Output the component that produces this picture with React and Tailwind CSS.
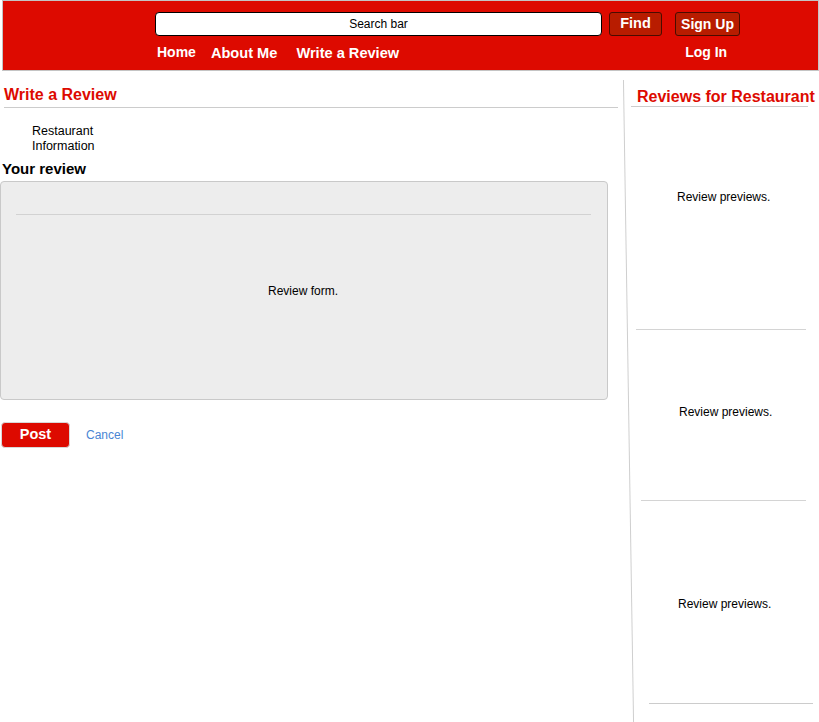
export default function App() {
  const font = { fontFamily: '"Liberation Sans", Arial, sans-serif' };
  return (
    <div className="w-[819px] h-[722px] bg-white overflow-hidden relative" style={font}>
      {/* Header */}
      <header className="ml-[2px] w-[817px] h-[71px] border border-[#c4c4c4] bg-[#dd0a00] pt-[11px] pl-[152px]">
        <div className="flex items-center h-[24px]">
          <div className="w-[447px] h-[24px] bg-white border border-black rounded-[4px] flex items-center justify-center text-[12px] text-black">
            Search bar
          </div>
          <button className="ml-[7px] w-[53px] h-[24px] bg-[#b81c00] border border-[#4a0c00] rounded-[3px] text-white font-bold text-[14.5px] flex items-center justify-center">
            Find
          </button>
          <button className="ml-[13px] w-[65px] h-[24px] bg-[#b81c00] border border-[#4a0c00] rounded-[3px] text-white font-bold text-[14px] flex items-center justify-center">
            Sign Up
          </button>
        </div>
        <div className="flex items-center mt-[9px] h-[17px] text-white font-bold leading-[17px]">
          <span className="ml-[2px] -mt-[2px] text-[14px]">Home</span>
          <span className="ml-[15px] text-[14.6px]">About Me</span>
          <span className="ml-[19px] text-[14.6px]">Write a Review</span>
          <span className="ml-[286px] -mt-[2px] text-[14px]">Log In</span>
        </div>
      </header>

      <main className="flex relative pt-[1px]">
        {/* Left column */}
        <section className="w-[625px] shrink-0">
          <div className="ml-[4px] w-[614px] border-b border-[#cccccc] pt-[14px] pb-[3px]">
            <h1 className="text-[#dd0a00] font-bold text-[16px] leading-[18px]">Write a Review</h1>
          </div>
          <div className="pl-[32px] mt-[16px] text-[12.5px] leading-[15px] text-black">
            <div>Restaurant</div>
            <div>Information</div>
          </div>
          <h2 className="ml-[2px] mt-[7px] font-bold text-[15px] leading-[16px] text-black">Your review</h2>
          <div className="mt-[4px] w-[608px] h-[219px] bg-[#ededed] border border-[#c9c9c9] rounded-[4px] flex flex-col">
            <div className="mt-[32px] ml-[15px] mr-[16px] h-px bg-[#d2d2d2]"></div>
            <div className="flex-1 flex items-center justify-center text-[12px] text-black pb-[33px] pr-[2px]">
              Review form.
            </div>
          </div>
          <div className="flex items-center mt-[22px]">
            <button className="ml-[1px] w-[69px] h-[26px] bg-[#dd0a00] border border-[#d8d8d8] rounded-[4px] text-white font-bold text-[14.5px] flex items-center justify-center">
              Post
            </button>
            <span className="ml-[16px] text-[12px] text-[#4a86d4]">Cancel</span>
          </div>
        </section>

        {/* Divider */}
        <div className="absolute left-[628px] top-[9px] w-px h-[642px] bg-[#cfcfcf] skew-x-[0.9deg]"></div>

        {/* Right column */}
        <aside className="flex-1 flex flex-col">
          <h2 className="pl-[12px] pt-[16px] text-[#dd0a00] font-bold text-[16px] leading-[18px] whitespace-nowrap">
            Reviews for Restaurant
          </h2>
          <div className="ml-[6px] w-[177px] h-px bg-[#cccccc]"></div>

          <div className="h-[223px] flex flex-col">
            <div className="pt-[83px] pl-[52px] text-[12px] leading-[15px] text-black">Review previews.</div>
            <div className="mt-auto ml-[11px] w-[170px] h-px bg-[#d4d4d4]"></div>
          </div>
          <div className="h-[171px] flex flex-col">
            <div className="pt-[75px] pl-[54px] text-[12px] leading-[15px] text-black">Review previews.</div>
            <div className="mt-auto ml-[16px] w-[165px] h-px bg-[#d4d4d4]"></div>
          </div>
          <div className="h-[203px] flex flex-col">
            <div className="pt-[96px] pl-[53px] text-[12px] leading-[15px] text-black">Review previews.</div>
            <div className="mt-auto ml-[24px] w-[164px] h-px bg-[#cccccc]"></div>
          </div>
        </aside>
      </main>
    </div>
  );
}
